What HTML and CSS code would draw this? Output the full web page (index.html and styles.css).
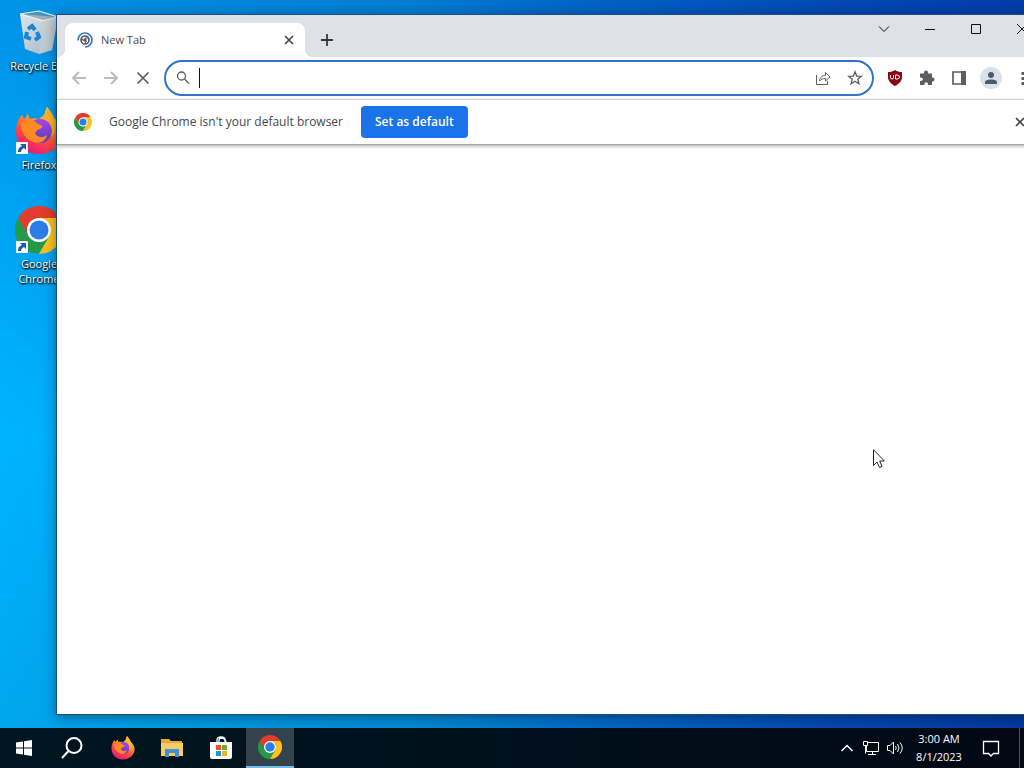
FILE: index.html
```html
<!DOCTYPE html>
<html lang="en">
<head>
<meta charset="utf-8">
<title>Desktop</title>
<link rel="stylesheet" href="styles.css">
</head>
<body>
<svg class="defs" aria-hidden="true">
  <defs>
    <linearGradient id="fox" x1="0.8" y1="0" x2="0.3" y2="1"><stop offset="0" stop-color="#ffe83d"/><stop offset=".35" stop-color="#ff9a26"/><stop offset=".65" stop-color="#ff4b3e"/><stop offset="1" stop-color="#e8157c"/></linearGradient>
    <linearGradient id="globe" x1="0.7" y1="0" x2="0.3" y2="1"><stop offset="0" stop-color="#a44af0"/><stop offset="1" stop-color="#5038bd"/></linearGradient>
    <linearGradient id="bin" x1="0" y1="0" x2="1" y2="1"><stop offset="0" stop-color="#dfe6ea"/><stop offset="1" stop-color="#a3b4c0"/></linearGradient>
    <symbol id="chrome" viewBox="0 0 48 48">
      <path fill="#e33b2e" d="M3.2 12A24 24 0 0 1 44.8 12H24L13.6 30Z"/>
      <path fill="#249a48" d="M3.2 12A24 24 0 0 0 24 48L34.4 30L24 36L13.6 30Z"/>
      <path fill="#fcc31e" d="M44.8 12A24 24 0 0 1 24 48L34.4 30L35 18L24 12Z"/>
      <circle cx="24" cy="24" r="12" fill="#fff"/><circle cx="24" cy="24" r="9.5" fill="#2b7de9"/>
    </symbol>
    <symbol id="firefox" viewBox="0 0 48 48">
      <path fill="url(#fox)" d="M29 8C30 5 31 2 32 0C35 4 38 7 39 11C45 16 48 22 47 29C45 40 36 47 24 47C11 47 1 38 1 25C1 18 3 12 7 8L9 12L13 7L15 12C18 11 21 11 24 12Z"/>
      <circle cx="25" cy="24" r="12" fill="url(#globe)"/>
      <path fill="#ff8a24" d="M6 17C12 12 18 12 23 17C27 18 28 19 27 21C23 22 21 24 20 26C22 31 28 31 32 28C31 35 23 38 16 34C9 30 6 24 6 17Z"/>
      <path fill="#ffb52a" d="M29 9C35 14 39 22 36 30C41 25 42 17 39 11C37 6 34 4 32 0C31 3 30 6 29 9Z"/>
    </symbol>
    <symbol id="cross" viewBox="0 0 16 16"><path d="M4 4L12 12M12 4L4 12" stroke="currentColor" fill="none" stroke-width="1.7"/></symbol>
    <symbol id="shortcut" viewBox="0 0 12 12"><path fill="#fff" stroke="#b9c5d0" stroke-width=".5" d="M0 0H12V12H0Z"/><path fill="#1c5bab" d="M4 2H10V8L8 6C6 7 5 8 5 10H2C2 7 3 5 6 4Z"/></symbol>
  </defs>
</svg>
<main class="desktop">
  <nav class="shortcuts" aria-label="Desktop">
    <a class="shortcut" href="#bin">
      <span class="art"><svg class="big" viewBox="0 0 48 48">
        <path fill="url(#bin)" d="M5 6L43 9L37 42L24 46L10 41Z"/><path fill="#7c919f" opacity=".55" d="M7 6L24 3L42 9L28 12Z"/><path fill="none" stroke="#eef4f7" stroke-width="1.200" d="M5 6L24 3L43 9L28 13Z"/><path fill="#c4d0d6" opacity=".6" d="M28 13L43 9L37 42L24 46Z"/>
        <g fill="none" stroke="#1b83d6" stroke-width="4"><path d="M13 21L17 18L20 22"/><path d="M22 24L24 29L20 32"/><path d="M16 31L11 29L12 24"/></g>
      </svg></span><span>Recycle Bin</span></a>
    <a class="shortcut" href="#firefox"><span class="art"><svg class="big"><use href="#firefox"/></svg><svg class="arrow"><use href="#shortcut"/></svg></span><span>Firefox</span></a>
    <a class="shortcut" href="#chrome"><span class="art"><svg class="big"><use href="#chrome"/></svg><svg class="arrow"><use href="#shortcut"/></svg></span><span>Google<br>Chrome</span></a>
  </nav>

  <section class="window" aria-label="New Tab">
    <header class="tabstrip">
      <div class="tab">
        <svg class="i18" viewBox="0 0 18 18" fill="none"><path stroke="#3978c8" stroke-width="1.7" d="M2 9.500A7 7 0 1 1 9 16"/><circle cx="9" cy="9" r="4" stroke="#50565e" stroke-width="1.6"/><circle cx="9" cy="9" r="1.700" fill="#50565e"/><path stroke="#50565e" d="M9 7H13M7.500 10L5.500 7M10.500 10L8.500 13"/></svg>
        <span class="tab-title">New Tab</span>
        <button class="tab-close" aria-label="Close tab"><svg class="i16"><use href="#cross"/></svg></button>
      </div>
      <button class="add" aria-label="New tab"><svg class="i16" viewBox="0 0 16 16"><path d="M8 2V14M2 8H14" stroke="#35383c" stroke-width="1.8"/></svg></button>
      <div class="controls">
        <button aria-label="Search tabs"><svg class="i16" viewBox="0 0 16 16"><path d="M3 5.500L8 10.500L13 5.500"/></svg></button>
        <button aria-label="Minimize"><svg class="i16" viewBox="0 0 16 16"><path d="M3 8.500H13"/></svg></button>
        <button aria-label="Maximize"><svg class="i16" viewBox="0 0 16 16"><path d="M3.500 3.500H12.500V12.500H3.500Z"/></svg></button>
        <button aria-label="Close"><svg class="i16" viewBox="0 0 16 16"><path d="M3 3L13 13M13 3L3 13"/></svg></button>
      </div>
    </header>
    <div class="toolbar">
      <button class="tool faded" aria-label="Back"><svg class="i16" viewBox="0 0 16 16"><path d="M15 8H2M8 2L2 8L8 14"/></svg></button>
      <button class="tool faded" aria-label="Forward"><svg class="i16" viewBox="0 0 16 16"><path d="M1 8H14M8 2L14 8L8 14"/></svg></button>
      <button class="tool" aria-label="Stop"><svg class="i16" viewBox="0 0 16 16"><path class="medium" d="M2.500 2.500L13.500 13.500M13.500 2.500L2.500 13.500"/></svg></button>
      <div class="omnibox">
        <svg class="i16 lens" viewBox="0 0 16 16"><circle cx="6.500" cy="6" r="4"/><path d="M9.500 9L14 13.500"/></svg>
        <input type="text" aria-label="Address and search bar">
        <button class="tool" aria-label="Share"><svg class="i16" viewBox="0 0 16 16"><path class="thin" d="M1.500 5V14.500H12.500V11M4.500 11C5 7 7 5.500 10.500 5.500V2.500L15 7L10.500 11V8.500C8 8.500 6 9 4.500 11Z"/></svg></button>
        <button class="tool" aria-label="Bookmark"><svg class="i16" viewBox="0 0 16 16"><path class="star" d="M8 1.800L9.700 6.100L14.300 6.400L10.800 9.300L11.900 13.800L8 11.300L4.100 13.800L5.200 9.300L1.700 6.400L6.300 6.100Z"/></svg></button>
      </div>
      <button class="tool" aria-label="uBlock Origin"><svg class="i16" viewBox="0 0 16 16"><path class="shield" d="M8 0C10 1.500 12 2 15 2V7C15 11 12 14 8 16C4 14 1 11 1 7V2C4 2 6 1.500 8 0Z"/><path class="mark" d="M3.500 5V7.500Q3.500 9 5 9Q6.500 9 6.500 7.500V5M8.500 9V5H10Q12.500 5 12.500 7Q12.500 9 10 9Z"/></svg></button>
      <button class="tool" aria-label="Extensions"><svg class="i16" viewBox="0 0 16 16"><path class="solid" d="M1 3.500H5V2.500A2 2 0 0 1 9 2.500V3.500H13V7.500H13.500A2 2 0 0 1 13.500 11.500H13V15H9V14A1.800 1.800 0 0 0 5.400 14V15H1V11H2A1.800 1.800 0 0 0 2 7.400H1Z"/></svg></button>
      <button class="tool" aria-label="Side panel"><svg class="i16" viewBox="0 0 16 16"><path class="medium" d="M2 2H14V14H2Z"/><path class="solid" d="M10 1H15V15H10Z"/></svg></button>
      <button class="tool" aria-label="Profile"><svg class="avatar" viewBox="0 0 22 22"><circle cx="11" cy="11" r="11" fill="#dbe1e8"/><circle cx="11" cy="8" r="3" fill="#4c5b6c"/><path fill="#4c5b6c" d="M5 17V15C5 11.500 17 11.500 17 15V17Z"/></svg></button>
      <button class="tool" aria-label="Menu"><svg class="i16" viewBox="0 0 16 16"><path class="solid" d="M6.500 2H9.500V5H6.500ZM6.500 7H9.500V10H6.500ZM6.500 12H9.500V15H6.500Z"/></svg></button>
    </div>
    <div class="infobar">
      <svg class="i18"><use href="#chrome"/></svg>
      <span class="message">Google Chrome isn't your default browser</span>
      <button class="primary">Set as default</button>
      <button class="dismiss" aria-label="Dismiss"><svg class="i16"><use href="#cross"/></svg></button>
    </div>
    <div class="page"></div>
  </section>
  <svg class="pointer" viewBox="0 0 12 20"><path fill="#fff" stroke="#222" d="M.5.7V16.500L4 13L6.500 18.500L9 17.500L6.700 12H11.300Z"/></svg>
</main>

<footer class="taskbar">
  <button aria-label="Start"><svg class="i18" viewBox="0 0 18 18" fill="#fff"><path d="M1 3.500L8 2.500V8.500H1ZM9 2.300L17 1V8.500H9ZM1 9.500H8V15.500L1 14.500ZM9 9.500H17V17L9 15.700Z"/></svg></button>
  <button aria-label="Search"><svg class="i24" viewBox="0 0 24 24" fill="none" stroke="#fff" stroke-width="2"><circle cx="14" cy="9.500" r="7.500"/><path d="M8.500 15L2 22"/></svg></button>
  <div class="apps">
    <button aria-label="Firefox"><svg class="i24"><use href="#firefox"/></svg></button>
    <button aria-label="File Explorer"><svg class="i24" viewBox="0 0 24 24"><path fill="#e9aa32" d="M1 3H9L11 5H22V20H1Z"/><path fill="#f4cb68" d="M1 7H23V20H1Z"/><path fill="#468fce" d="M5 13H19V21H15V17H9V21H5Z"/></svg></button>
    <button aria-label="Microsoft Store"><svg class="i24" viewBox="0 0 24 24"><path fill="none" stroke="#fff" stroke-width="1.300" d="M8 7V4Q8 1 12 1Q16 1 16 4V7M10 7V4Q10 2 13 2Q17 3 17 7"/><path fill="#fff" d="M1 6H23V21Q23 23 21 23H3Q1 23 1 21Z"/><path fill="#e65428" d="M7 9H12V14H7Z"/><path fill="#72aa2d" d="M13 9H18V14H13Z"/><path fill="#1797d6" d="M7 15H12V20H7Z"/><path fill="#efb51d" d="M13 15H18V20H13Z"/></svg></button>
    <button class="active" aria-label="Google Chrome"><svg class="i24"><use href="#chrome"/></svg></button>
  </div>
  <div class="tray">
    <button class="small" aria-label="Show hidden icons"><svg class="i18" viewBox="0 0 18 18"><path stroke-width="1.500" d="M3.500 12L9 6.500L14.500 12"/></svg></button>
    <button class="small" aria-label="Network"><svg class="i18" viewBox="0 0 18 18"><path d="M6 3.500H16.500V12.500H4.500V7M1.500 2.500H5.500V6.500H1.500ZM3.500 7V14.500M10.500 13V15.500M6 15.500H14"/></svg></button>
    <button class="small" aria-label="Volume"><svg class="i18" viewBox="0 0 18 18"><path d="M1.500 6.500H4L7.500 3V15L4 11.500H1.500ZM9.500 7Q11 9 9.500 11M11.500 5Q14.500 9 11.500 13M14 3.500Q18.500 9 14 14.500"/></svg></button>
    <button class="clock"><time>3:00 AM</time><time>8/1/2023</time></button>
    <button class="notice" aria-label="Notifications"><svg class="i18" viewBox="0 0 18 18"><path stroke-width="1.300" d="M1.500 2.500H16.500V14.500H11.500L9 17L6.500 14.500H1.500Z"/></svg></button>
    <button class="peek" aria-label="Show desktop"></button>
  </div>
</footer>
</body>
</html>
```
FILE: styles.css
```css
* { box-sizing: border-box; }
body {
  margin: 0;
  height: 100vh;
  overflow: hidden;
  display: flex;
  flex-direction: column;
  font: 11px/16px "Open Sans", "Noto Sans", sans-serif;
  color: #45484d;
}
button {
  display: flex;
  align-items: center;
  justify-content: center;
  flex: none;
  padding: 0;
  border: 0;
  background: none;
  color: #45484d;
  font: inherit;
}
svg { display: block; flex: none; }
.defs { position: absolute; width: 0; height: 0; }
.i16 { width: 16px; height: 16px; }
.i18 { width: 18px; height: 18px; }
.i24 { width: 24px; height: 24px; }

.desktop {
  position: relative;
  flex: 1;
  min-height: 0;
  overflow: hidden;
  background:
    linear-gradient(to bottom, rgba(0, 72, 176, .3), transparent 60%, rgba(0, 72, 120, .12)),
    linear-gradient(to right, #00b4ff 0%, #00acf8 10%, #0094e4 40%, #0068cc 62%, #0448b8 82%, #0338a8 100%);
}
.shortcuts {
  display: flex;
  flex-direction: column;
  width: 78px;
  padding-top: 8px;
}
.shortcut {
  display: flex;
  flex-direction: column;
  align-items: center;
  gap: 2px;
  min-height: 99px;
  color: #fff;
  line-height: 15px;
  text-align: center;
  text-decoration: none;
  text-shadow: 0 1px 2px #000, 1px 1px 2px #000;
}
.art { position: relative; }
.big { width: 48px; height: 48px; }
.arrow { position: absolute; left: 1px; bottom: 1px; width: 12px; height: 12px; }

.window {
  position: absolute;
  inset: 14px -22px 13px 56px;
  display: flex;
  flex-direction: column;
  border: 1px solid #1d5075;
  background: #fff;
  box-shadow: 0 2px 12px rgba(0, 0, 0, .4);
}
.tabstrip {
  display: flex;
  height: 42px;
  padding: 8px 0 0 8px;
  background: #dee1e6;
}
.tab {
  position: relative;
  display: flex;
  align-items: center;
  gap: 7px;
  width: 240px;
  padding: 0 8px 0 11px;
  border-radius: 8px 8px 0 0;
  background: #fff;
}
.tab::before,
.tab::after {
  content: "";
  position: absolute;
  bottom: 0;
  width: 8px;
  height: 8px;
}
.tab::before { right: 100%; background: radial-gradient(circle at 0 0, transparent 8px, #fff 8px); }
.tab::after { left: 100%; background: radial-gradient(circle at 100% 0, transparent 8px, #fff 8px); }
.tab-title { flex: 1; }
.tab-close { width: 16px; height: 16px; }
.add { width: 28px; height: 34px; margin-left: 8px; }
.controls {
  display: flex;
  align-self: flex-start;
  margin: -8px 0 0 auto;
}
.controls button { width: 46px; height: 28px; }
.controls path { fill: none; stroke: #111; stroke-width: 1; }

.toolbar {
  display: flex;
  align-items: center;
  height: 43px;
  padding: 0 6px;
  border-bottom: 1px solid #dee1e6;
}
.tool { width: 32px; height: 32px; }
.tool path { fill: none; stroke: #5a5d61; stroke-width: 2; }
.faded path { stroke: #b9bbbe; }
.tool .thin { stroke-width: 1; }
.tool .star { stroke-width: 1.3; }
.tool .medium { stroke-width: 1.7; }
.tool .solid { fill: #5a5d61; stroke: none; }
.tool .shield { fill: #8c0610; stroke: none; }
.tool .mark { stroke: #fff; stroke-width: 1; }
.tool .avatar { width: 22px; height: 22px; }
.tool .avatar path { fill: #4c5b6c; stroke: none; }
.omnibox {
  display: flex;
  flex: 1;
  align-items: center;
  height: 36px;
  margin: 0 5px;
  padding: 0 1px 0 9px;
  border: 2px solid #2f73cd;
  border-radius: 18px;
}
.lens { fill: none; stroke: #5a5d61; stroke-width: 1.3; }
.omnibox input {
  flex: 1;
  min-width: 0;
  height: 20px;
  margin-left: 8px;
  padding: 0;
  border: 0;
  border-left: 1px solid #111;
  outline: 0;
  background: none;
  font: inherit;
}
.infobar {
  z-index: 1;
  display: flex;
  align-items: center;
  height: 45px;
  padding: 0 9px 0 17px;
  border-bottom: 1px solid #a6a6a6;
  background: #fff;
  box-shadow: 0 1px 4px rgba(0, 0, 0, .35);
}
.message { margin: 0 18px 0 17px; font-size: 12px; }
.primary {
  height: 32px;
  padding: 0 14px;
  border-radius: 4px;
  background: #1a73e8;
  color: #fff;
  font-size: 12px;
  font-weight: 600;
}
.dismiss { width: 32px; height: 32px; margin-left: auto; }
.page { flex: 1; }
.pointer { position: absolute; left: 873px; top: 449px; width: 12px; height: 20px; }

.taskbar {
  display: flex;
  flex: none;
  height: 40px;
  background: linear-gradient(to right, #001620, #00101c 50%, #020814);
}
.taskbar button { width: 48px; color: #fff; }
.apps { display: flex; gap: 1px; margin-left: 3px; }
.taskbar .active { border-bottom: 2px solid #76b9ed; background: #34424c; }
.tray { display: flex; margin-left: auto; }
.tray path { fill: none; stroke: #fff; }
.taskbar .small { width: 24px; }
.taskbar .clock { flex-direction: column; width: 64px; line-height: 18px; }
.taskbar .notice { width: 40px; margin-right: 8px; }
.taskbar .peek { width: 5px; border-left: 1px solid #46515c; }
```
